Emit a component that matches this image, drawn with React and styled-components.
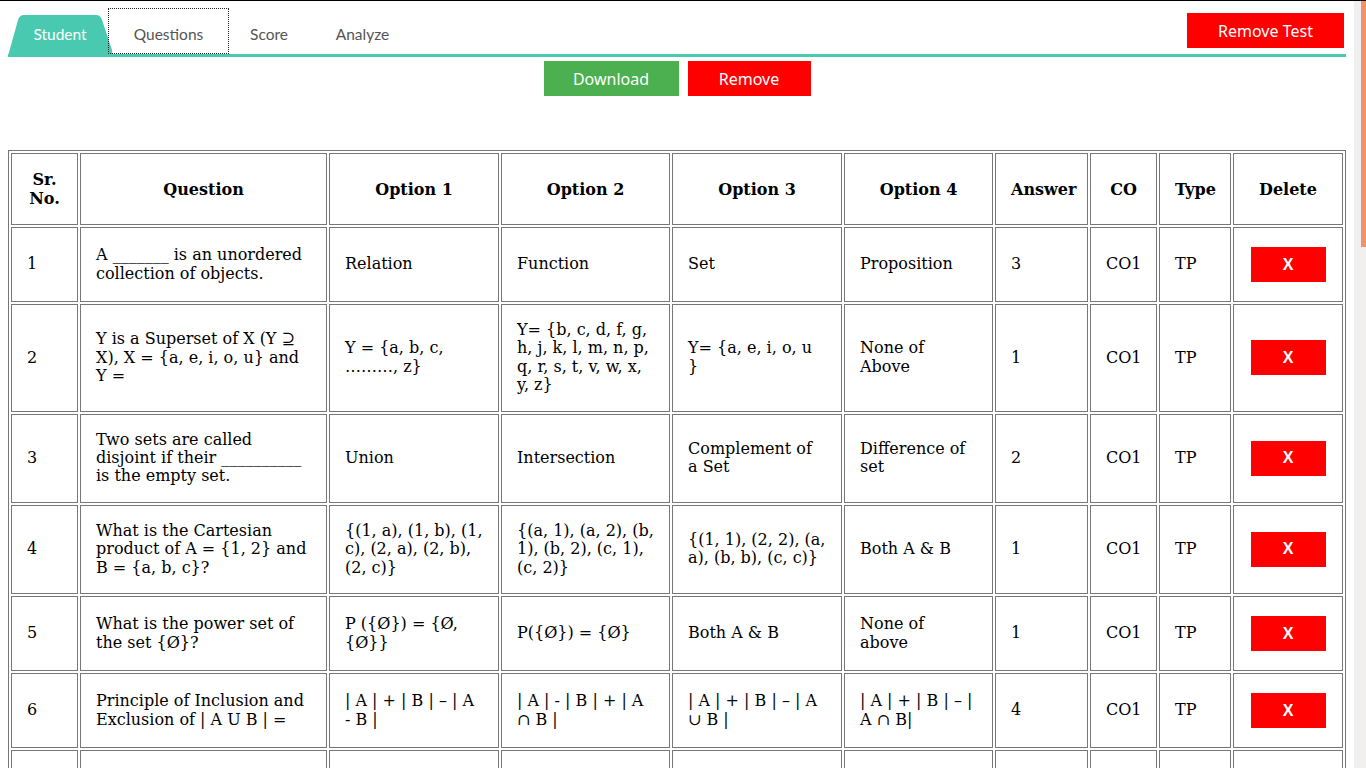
import React from 'react'
import styled, { createGlobalStyle } from 'styled-components'

const GlobalStyle = createGlobalStyle`
  html, body {
    margin: 0;
    padding: 0;
    background: #fff;
    overflow: hidden;
  }
  body {
    font-family: "DejaVu Serif", serif;
  }
`

const Shell = styled.div`
  display: flex;
  height: 100vh;
  box-sizing: border-box;
  border-top: 1px solid #000;
`

const Page = styled.div`
  flex: 1;
  min-width: 0;
  overflow: hidden;
  padding: 7px 8px 8px;
`

const ScrollTrack = styled.div`
  width: 12px;
  flex-shrink: 0;
  background: #f1f0ee;
`

const ScrollThumb = styled.div`
  width: 5px;
  height: 246px;
  margin-left: 7px;
  background: #f0926d;
`

const Nav = styled.div`
  display: flex;
  justify-content: space-between;
  height: 46px;
  border-bottom: 3px solid #48c9b0;
`

const Tabs = styled.div`
  display: flex;
  align-items: flex-end;
`

const Tab = styled.button`
  position: relative;
  width: ${({ $w }) => $w}px;
  height: 46px;
  margin-left: ${({ $overlap }) => ($overlap ? '-4px' : '0')};
  padding: 15px 0 11px;
  background: transparent;
  border: 1px dotted;
  border-color: ${({ $focused }) => ($focused ? '#222' : 'transparent')};
  font-family: "Lato", "Open Sans", sans-serif;
  font-size: 15.5px;
  line-height: 20px;
  color: ${({ $active }) => ($active ? '#fff' : '#555')};
  cursor: pointer;
  z-index: 0;

  &::before {
    content: '';
    display: ${({ $active }) => ($active ? 'block' : 'none')};
    position: absolute;
    left: -1px;
    right: -1px;
    top: 6px;
    bottom: -1px;
    background: #48c9b0;
    clip-path: path('M0 41 L10 5 Q11.5 0 16 0 L88 0 Q92.5 0 94 5 L106 41 Z');
    z-index: -1;
  }
`

const RedButton = styled.button`
  background: #ff0000;
  color: #fff;
  border: none;
  height: 35px;
  width: ${({ $w }) => $w}px;
  font-family: "Noto Sans", "Open Sans", sans-serif;
  font-size: 16px;
  cursor: pointer;
`

const RemoveTest = styled(RedButton)`
  margin-top: 5px;
  margin-right: 2px;
`

const Actions = styled.div`
  display: flex;
  justify-content: center;
  gap: 9px;
  margin-top: 4px;
`

const GreenButton = styled(RedButton)`
  background: #4caf50;
`

const Table = styled.table`
  width: 100%;
  margin-top: 54px;
  table-layout: fixed;
  border: 1px solid #777;
  border-spacing: 2px;
`

const Th = styled.th`
  box-sizing: border-box;
  width: ${({ $w }) => $w}px;
  border: 1px solid #777;
  padding: 16px 15px;
  font-size: 16px;
  line-height: 19px;
  font-weight: bold;
  text-align: center;
  color: #000;
`

const Td = styled.td`
  box-sizing: border-box;
  border: 1px solid #777;
  padding: 16px 15px;
  font-size: 16px;
  line-height: 18.4px;
  color: #000;
  text-align: left;
  vertical-align: middle;
`

const DeleteButton = styled.button`
  display: block;
  width: 75px;
  height: 35px;
  margin: 3px auto;
  border: none;
  background: #ff0000;
  color: #fff;
  font-family: "Liberation Sans", Arial, sans-serif;
  font-weight: bold;
  font-size: 16px;
  cursor: pointer;
`

const columns = [
  ['Sr. No.', 67],
  ['Question', 247],
  ['Option 1', 170],
  ['Option 2', 169],
  ['Option 3', 170],
  ['Option 4', 149],
  ['Answer', 93],
  ['CO', 67],
  ['Type', 72],
  ['Delete', 110],
]

const questions = [
  ['A _______ is an unordered collection of objects.', 'Relation', 'Function', 'Set', 'Proposition', 3],
  ['Y is a Superset of X (Y ⊇ X), X = {a, e, i, o, u} and Y =', 'Y = {a, b, c, ………, z}', 'Y= {b, c, d, f, g, h, j, k, l, m, n, p, q, r, s, t, v, w, x, y, z}', 'Y= {a, e, i, o, u }', 'None of Above', 1],
  ['Two sets are called disjoint if their __________ is the empty set.', 'Union', 'Intersection', 'Complement of a Set', 'Difference of set', 2],
  ['What is the Cartesian product of A = {1, 2} and B = {a, b, c}?', '{(1, a), (1, b), (1, c), (2, a), (2, b), (2, c)}', '{(a, 1), (a, 2), (b, 1), (b, 2), (c, 1), (c, 2)}', '{(1, 1), (2, 2), (a, a), (b, b), (c, c)}', 'Both A & B', 1],
  ['What is the power set of the set {Ø}?', 'P ({Ø}) = {Ø, {Ø}}', 'P({Ø}) = {Ø}', 'Both A & B', 'None of above', 1],
  ['Principle of Inclusion and Exclusion of | A U B | =', '| A | + | B | – | A - B |', '| A | - | B | + | A ∩ B |', '| A | + | B | – | A ∪ B |', '| A | + | B | – | A ∩ B|', 4],
  ['The number of subsets of a set with 3 elements is', '3', '6', '8', '9', 3],
  ['The set of natural numbers is a ________ set.', 'Finite', 'Infinite', 'Empty', 'Singleton', 2],
  ['A relation R on a set A is reflexive if', '(a, a) ∈ R for all a ∈ A', '(a, b) ∈ R ⇒ (b, a) ∈ R', 'R = Ø', 'None of above', 1],
  ['A relation which is reflexive, symmetric and transitive is', 'Partial order', 'Equivalence relation', 'Function', 'None of above', 2],
  ['A function which is both one-one and onto is called', 'Injective', 'Surjective', 'Bijective', 'Constant', 3],
  ['The complement of the universal set U is', 'U', 'Ø', '{0}', 'None of above', 2],
]

const tabs = [
  { label: 'Student', w: 104, active: true },
  { label: 'Questions', w: 121, focused: true, overlap: true },
  { label: 'Score', w: 80 },
  { label: 'Analyze', w: 107 },
]

export default function App() {
  return (
    <Shell>
      <GlobalStyle />
      <Page>
        <Nav>
          <Tabs>
            {tabs.map((t) => (
              <Tab key={t.label} $w={t.w} $active={t.active} $focused={t.focused} $overlap={t.overlap}>
                {t.label}
              </Tab>
            ))}
          </Tabs>
          <RemoveTest $w={157}>Remove Test</RemoveTest>
        </Nav>

        <Actions>
          <GreenButton $w={135}>Download</GreenButton>
          <RedButton $w={123}>Remove</RedButton>
        </Actions>

        <Table>
          <thead>
            <tr>
              {columns.map(([name, w]) => (
                <Th key={name} $w={w}>{name}</Th>
              ))}
            </tr>
          </thead>
          <tbody>
            {questions.map((q, i) => (
              <tr key={i}>
                <Td>{i + 1}</Td>
                <Td>{q[0]}</Td>
                <Td>{q[1]}</Td>
                <Td>{q[2]}</Td>
                <Td>{q[3]}</Td>
                <Td>{q[4]}</Td>
                <Td>{q[5]}</Td>
                <Td>CO1</Td>
                <Td>TP</Td>
                <Td>
                  <DeleteButton>X</DeleteButton>
                </Td>
              </tr>
            ))}
          </tbody>
        </Table>
      </Page>
      <ScrollTrack>
        <ScrollThumb />
      </ScrollTrack>
    </Shell>
  )
}
